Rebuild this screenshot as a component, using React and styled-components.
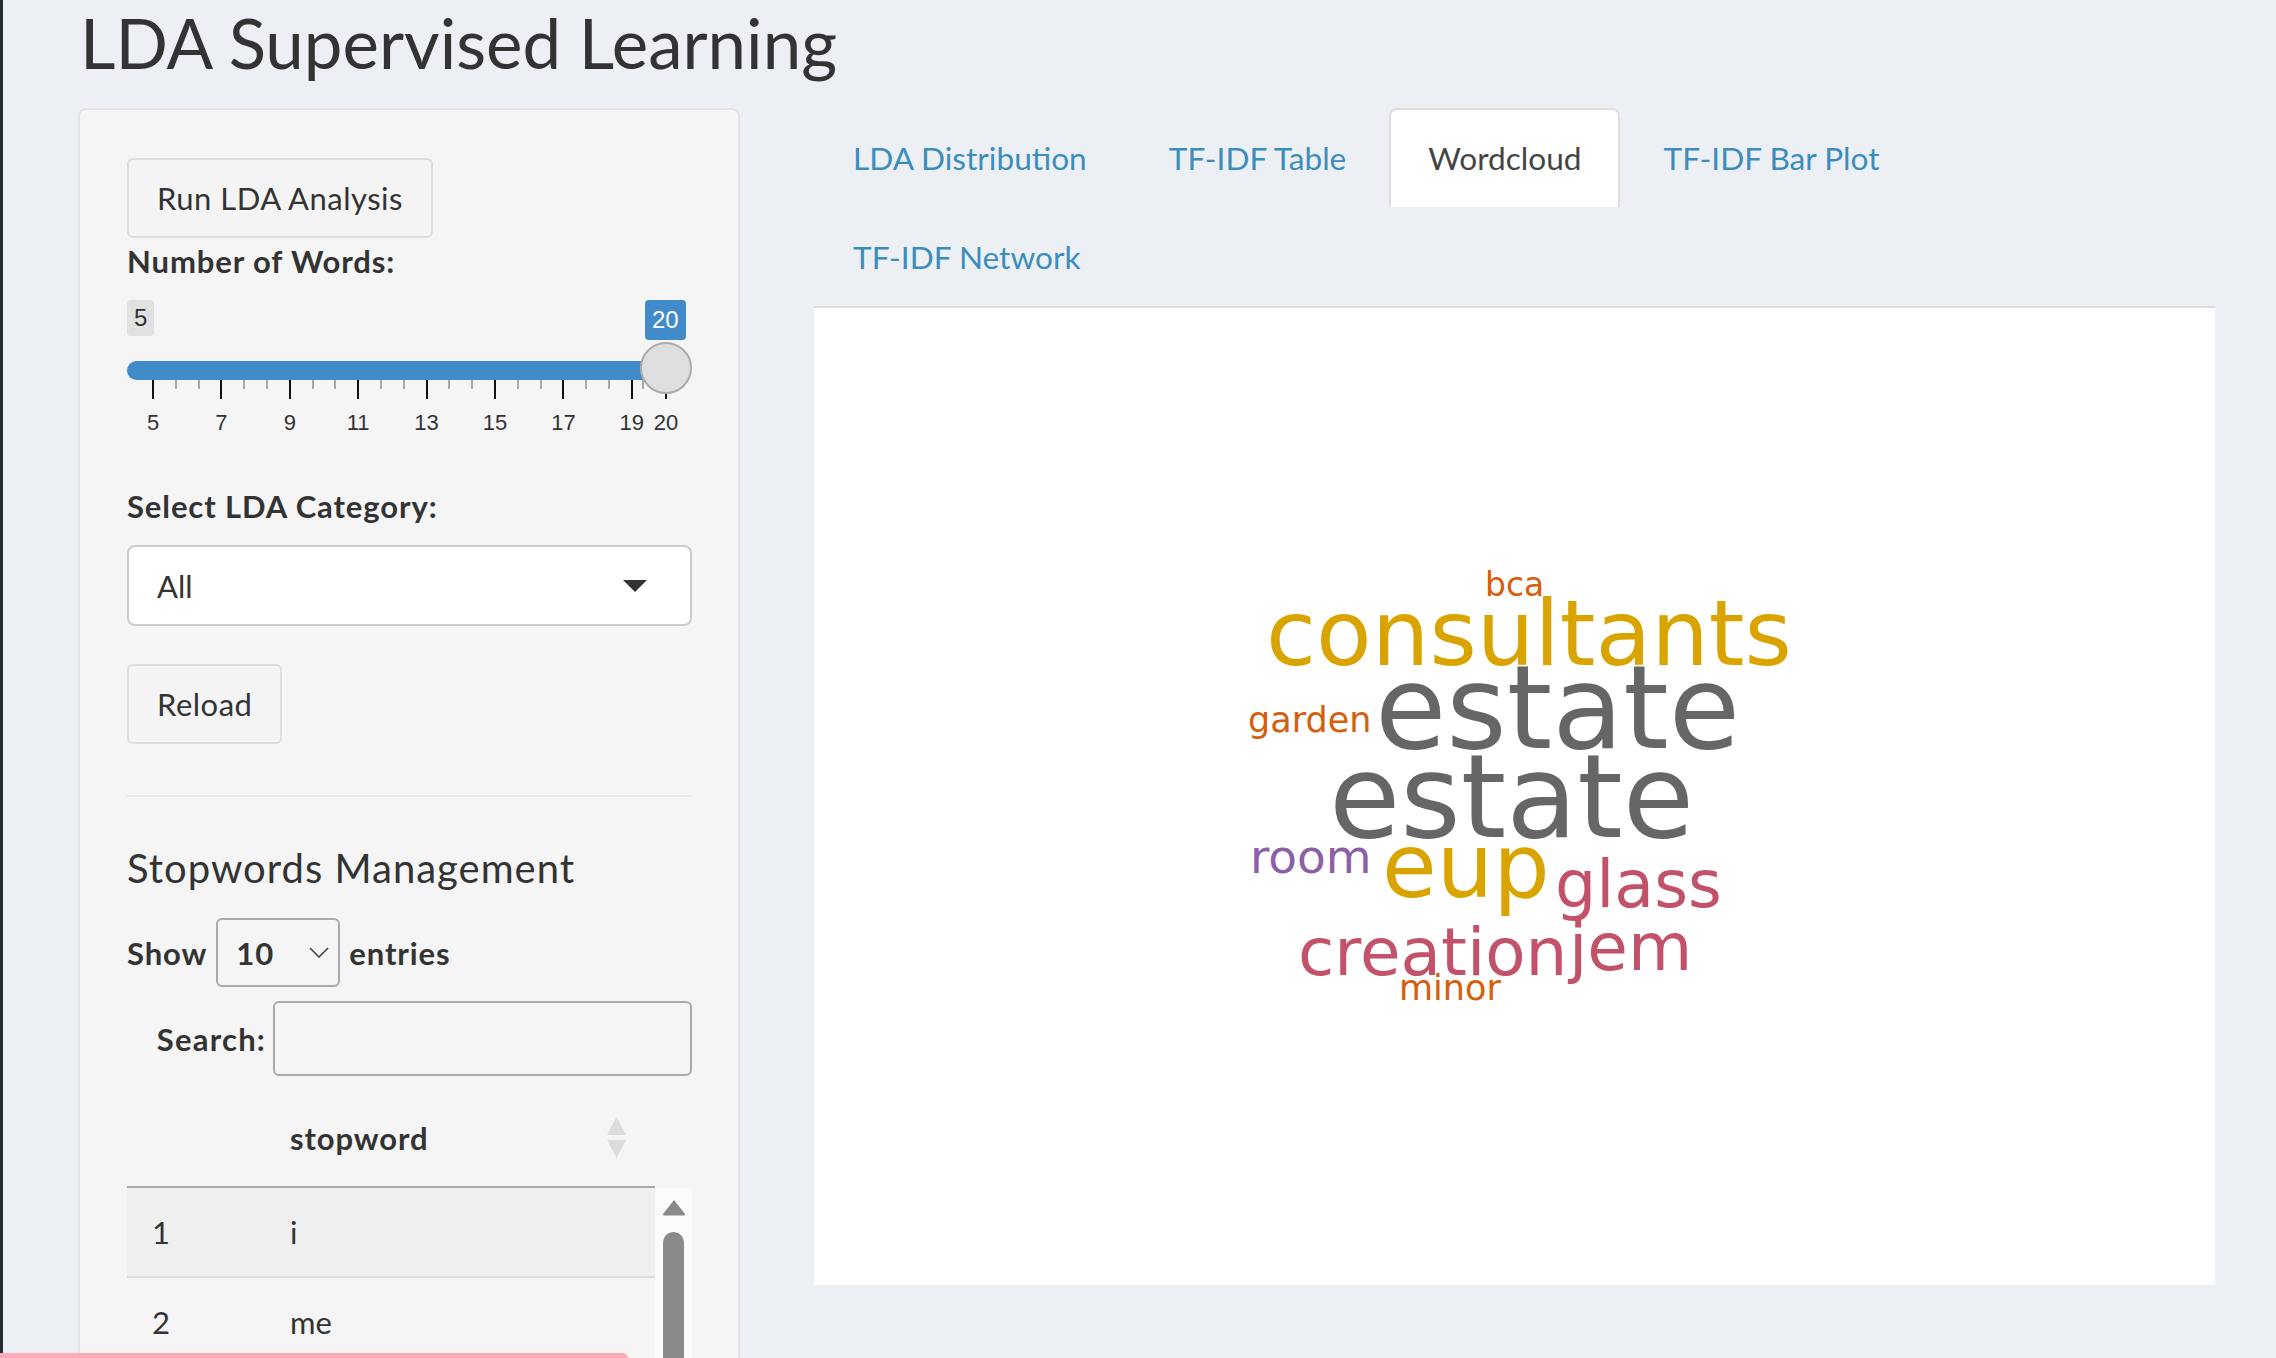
import React from 'react';
import styled, { createGlobalStyle } from 'styled-components';

const GlobalStyle = createGlobalStyle`
  html, body {
    margin: 0;
    padding: 0;
    overflow: hidden;
  }
  body {
    background: #ecf0f5;
    font-family: Lato, "Open Sans", sans-serif;
    color: #333;
  }
  * { box-sizing: border-box; }
`;

const Page = styled.div`
  height: 1358px;
  border-left: 3px solid #222d32;
  padding: 0 61px 0 75px;
  overflow: hidden;
`;

const Title = styled.h1`
  margin: 0;
  height: 108px;
  padding: 5px 0 0 2px;
  font-size: 69px;
  font-weight: 400;
  line-height: 1.1;
  color: #333;
`;

const Layout = styled.div`
  display: grid;
  grid-template-columns: 662px 1fr;
  column-gap: 74px;
  align-items: start;
`;

const Well = styled.div`
  height: 1300px;
  background: #f5f5f5;
  border: 2px solid #e3e3e3;
  border-radius: 8px;
  padding: 48px 46px 0 47px;
`;

const ActionButton = styled.button`
  display: block;
  height: 80px;
  margin-top: ${p => p.$mt || 0}px;
  padding: 0 28px;
  border: 2px solid #ddd;
  border-radius: 6px;
  background: #f4f4f4;
  color: #333;
  font-family: inherit;
  font-size: 31px;
  letter-spacing: 0.5px;
`;

const Label = styled.div`
  margin-top: ${p => p.$mt || 0}px;
  font-size: 31px;
  font-weight: 700;
  line-height: 37px;
  letter-spacing: 0.9px;
`;

/* range slider */
const Slider = styled.div`
  position: relative;
  height: 140px;
  margin-top: 20px;
`;

const ValueTag = styled.span`
  position: absolute;
  top: 0;
  height: ${p => (p.$active ? 40 : 36)}px;
  padding: 0 7px;
  border-radius: 4px;
  background: ${p => (p.$active ? '#428bca' : '#e1e1e1')};
  color: ${p => (p.$active ? '#fff' : '#333')};
  font: 24px "Liberation Sans", Arial, sans-serif;
  line-height: ${p => (p.$active ? 40 : 36)}px;
`;

const Track = styled.div`
  position: absolute;
  left: 0;
  right: 0;
  top: 61px;
  height: 19px;
  border-radius: 10px;
  background: #ededed;
`;

const Fill = styled.div`
  position: absolute;
  left: 0;
  top: 61px;
  height: 19px;
  border-radius: 10px 0 0 10px;
  background: #428bca;
`;

const Handle = styled.div`
  position: absolute;
  top: 42px;
  width: 52px;
  height: 52px;
  border-radius: 50%;
  background: #dedede;
  border: 2px solid #ababab;
`;

const Tick = styled.div`
  position: absolute;
  top: 80px;
  width: 2px;
  height: ${p => (p.$major ? 19 : 9)}px;
  background: ${p => (p.$major ? '#111' : '#aaa')};
`;

const TickLabel = styled.span`
  position: absolute;
  top: 110px;
  transform: translateX(-50%);
  font: 22px "Liberation Sans", Arial, sans-serif;
  line-height: 26px;
  color: #333;
`;

const SelectBox = styled.div`
  display: flex;
  align-items: center;
  justify-content: space-between;
  height: 81px;
  margin-top: 20px;
  padding: 0 43px 0 28px;
  background: #fff;
  border: 2px solid #ccc;
  border-radius: 8px;
  font-size: 31px;
`;

const Caret = styled.span`
  width: 0;
  height: 0;
  border-left: 12px solid transparent;
  border-right: 12px solid transparent;
  border-top: 12px solid #333;
`;

const Divider = styled.hr`
  margin: 51px 0 0;
  border: 0;
  border-top: 2px solid #e8e8e8;
`;

const Heading = styled.h3`
  margin: 48px 0 0;
  font-size: 40px;
  font-weight: 400;
  line-height: 47px;
  letter-spacing: 1px;
`;

const LengthRow = styled.div`
  display: flex;
  align-items: center;
  gap: 9px;
  height: 69px;
  margin-top: 26px;
  font-size: 31px;
  font-weight: 700;
  letter-spacing: 0.9px;
`;

const LengthSelect = styled.div`
  display: flex;
  align-items: center;
  justify-content: space-between;
  width: 124px;
  height: 69px;
  padding: 0 9px 0 18px;
  border: 2px solid #aaa;
  border-radius: 6px;
`;

const SearchRow = styled.div`
  display: flex;
  align-items: center;
  justify-content: flex-end;
  gap: 7px;
  margin-top: 14px;
  font-size: 31px;
  font-weight: 700;
  letter-spacing: 1.2px;
`;

const SearchInput = styled.div`
  width: 419px;
  height: 75px;
  border: 2px solid #aaa;
  border-radius: 6px;
`;

const TableHeader = styled.div`
  display: grid;
  grid-template-columns: 163px 1fr;
  margin: 10px 37px 0 0;
  padding: 31px 0 27px;
  border-bottom: 2px solid #aaa;
  font-size: 31px;
  font-weight: 700;
  line-height: 37px;
  letter-spacing: 0.9px;
`;

const HeadCell = styled.div`
  display: flex;
  align-items: center;
  justify-content: space-between;
  padding-right: 29px;
`;

const TableBody = styled.div`
  display: grid;
  grid-template-columns: 1fr 37px;
`;

const Row = styled.div`
  display: grid;
  grid-template-columns: 138px 1fr;
  align-items: center;
  height: 90px;
  padding-left: 25px;
  border-bottom: 2px solid #ddd;
  background: ${p => (p.$odd ? '#efefef' : 'transparent')};
  font-size: 31px;
  line-height: 37px;
`;

const ScrollTrack = styled.div`
  display: flex;
  flex-direction: column;
  align-items: center;
  padding-top: 11px;
  background: #fbfbfb;
`;

const Thumb = styled.div`
  width: 21px;
  height: 400px;
  margin-top: 16px;
  border-radius: 11px;
  background: #8a8a8a;
`;

/* main panel */
const TabBar = styled.div`
  border-bottom: 2px solid #ddd;
`;

const TabList = styled.ul`
  display: flex;
  flex-wrap: wrap;
  max-width: 1200px;
  margin: 0;
  padding: 0;
  list-style: none;
`;

const Tab = styled.li`
  height: 99px;
  margin-right: 4px;
  padding: 29px 37px 0;
  border: 2px solid ${p => (p.$active ? '#ddd' : 'transparent')};
  border-bottom: none;
  border-radius: 8px 8px 0 0;
  background: ${p => (p.$active ? '#fff' : 'transparent')};
  color: ${p => (p.$active ? '#444' : '#3c8dbc')};
  font-size: 31.6px;
  line-height: 38px;
  white-space: nowrap;
`;

const Content = styled.div`
  height: 977px;
  background: #fff;
`;

const Cloud = styled.svg`
  display: block;
  width: 100%;
  height: 100%;
  font-family: "DejaVu Sans", Verdana, sans-serif;
`;

const Toast = styled.div`
  position: fixed;
  left: 0;
  bottom: 0;
  width: 628px;
  height: 5px;
  border-top-right-radius: 6px;
  background: #ffacb9;
`;

const tabs = ['LDA Distribution', 'TF-IDF Table', 'Wordcloud', 'TF-IDF Bar Plot', 'TF-IDF Network'];

const words = [
  { t: 'bca', x: 671, y: 288, s: 33, c: '#d55e0c' },
  { t: 'consultants', x: 452, y: 357, s: 91, c: '#daa400' },
  { t: 'estate', x: 561, y: 440, s: 116, c: '#666666' },
  { t: 'garden', x: 434, y: 424, s: 35, c: '#d55e0c' },
  { t: 'estate', x: 515, y: 529, s: 116, c: '#666666' },
  { t: 'room', x: 436, y: 565, s: 47, c: '#8c60a8' },
  { t: 'eup', x: 568, y: 589, s: 89, c: '#daa400' },
  { t: 'glass', x: 741, y: 599, s: 65, c: '#c2526a' },
  { t: 'creation', x: 484, y: 667, s: 66, c: '#c2526a' },
  { t: 'jem', x: 755, y: 662, s: 66, c: '#c2526a' },
  { t: 'minor', x: 585, y: 692, s: 35, c: '#d55e0c' },
];

const stopwords = ['i', 'me', 'my', 'myself', 'we', 'our'];

const MIN = 5;
const MAX = 20;
const UNIT = 34.2;
const pos = v => 26 + (v - MIN) * UNIT;

function RangeSlider({ value }) {
  const ticks = [];
  for (let v = MIN; v < MAX; v += 2) {
    ticks.push({ v, major: true });
    const step = Math.min(2, MAX - v);
    ticks.push({ v: v + step / 3 });
    ticks.push({ v: v + (2 * step) / 3 });
  }
  ticks.push({ v: MAX, major: true });
  const labels = [5, 7, 9, 11, 13, 15, 17, 19, 20];

  return (
    <Slider>
      <ValueTag style={{ left: 0 }}>{MIN}</ValueTag>
      <ValueTag $active style={{ left: pos(value) - 21 }}>{value}</ValueTag>
      <Track />
      <Fill style={{ width: pos(value) }} />
      {ticks.map((t, i) => (
        <Tick key={i} $major={t.major} style={{ left: pos(t.v) - 1 }} />
      ))}
      {labels.map(l => (
        <TickLabel key={l} style={{ left: pos(l) }}>{l}</TickLabel>
      ))}
      <Handle style={{ left: pos(value) - 26 }} />
    </Slider>
  );
}

function SortIcon() {
  return (
    <svg width="19" height="42" viewBox="0 0 19 42">
      <path d="M9.5 0 L19 18 L0 18 Z" fill="#dcdcdc" />
      <path d="M0 23 L19 23 L9.5 41 Z" fill="#dcdcdc" />
    </svg>
  );
}

export default function App() {
  return (
    <Page>
      <GlobalStyle />
      <Title>LDA Supervised Learning</Title>
      <Layout>
        <Well>
          <ActionButton>Run LDA Analysis</ActionButton>
          <Label $mt={5}>Number of Words:</Label>
          <RangeSlider value={20} />
          <Label $mt={48}>Select LDA Category:</Label>
          <SelectBox>
            All
            <Caret />
          </SelectBox>
          <ActionButton $mt={38}>Reload</ActionButton>
          <Divider />
          <Heading>Stopwords Management</Heading>
          <LengthRow>
            Show
            <LengthSelect>
              10
              <svg width="20" height="11" viewBox="0 0 20 11">
                <polyline points="1,1 10,10 19,1" fill="none" stroke="#444" strokeWidth="1.6" />
              </svg>
            </LengthSelect>
            entries
          </LengthRow>
          <SearchRow>
            Search:
            <SearchInput />
          </SearchRow>
          <TableHeader>
            <div />
            <HeadCell>
              stopword
              <SortIcon />
            </HeadCell>
          </TableHeader>
          <TableBody>
            <div>
              {stopwords.map((w, i) => (
                <Row key={w} $odd={i % 2 === 0}>
                  <span>{i + 1}</span>
                  <span>{w}</span>
                </Row>
              ))}
            </div>
            <ScrollTrack>
              <svg width="24" height="17" viewBox="0 0 24 17">
                <path d="M12 1 L23 15 Q23.5 16.5 21.5 16.5 L2.5 16.5 Q0.5 16.5 1 15 Z" fill="#8a8a8a" />
              </svg>
              <Thumb />
            </ScrollTrack>
          </TableBody>
        </Well>

        <div>
          <TabBar>
            <TabList>
              {tabs.map(t => (
                <Tab key={t} $active={t === 'Wordcloud'}>{t}</Tab>
              ))}
            </TabList>
          </TabBar>
          <Content>
            <Cloud viewBox="0 0 1401 977">
              {words.map((w, i) => (
                <text key={i} x={w.x} y={w.y} fontSize={w.s} fill={w.c}>{w.t}</text>
              ))}
            </Cloud>
          </Content>
        </div>
      </Layout>
      <Toast />
    </Page>
  );
}
